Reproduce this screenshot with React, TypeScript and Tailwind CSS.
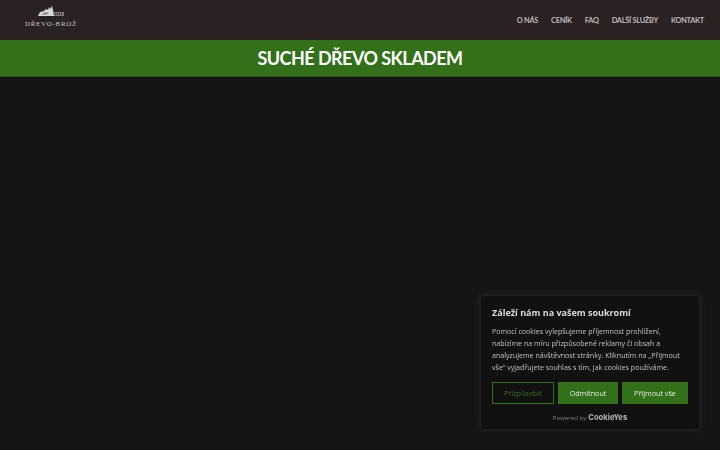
import React from "react";

const navItems = ["O NÁS", "CENÍK", "FAQ", "DALŠÍ SLUŽBY", "KONTAKT"];

function Logo() {
  return (
    <div className="flex w-[52px] flex-col items-center">
      <svg width="28" height="11" viewBox="0 0 28 11" className="mt-[6px]">
        <path d="M1 10 L3 6 L7 5 L9 3 L11 4 L12 1 L13 3 L15 0 L16 4 L17 10 Z" fill="#d8d8d8" />
        <path d="M4 8 L9 6 L12 7 L9 9 Z" fill="#8f8a8a" />
        <rect x="17" y="6" width="10" height="4" fill="#7d7878" />
        <path d="M18 7h1v2h-1zM20 7h1v2h-1zM22 7h1v2h-1zM24 7h1v2h-1z" fill="#3a3133" />
      </svg>
      <span className="mt-[2px] whitespace-nowrap font-['Liberation_Serif',serif] text-[7px] leading-[10px] tracking-[0.7px] text-[#c8c4c4]">
        DŘEVO-BROŽ
      </span>
    </div>
  );
}

function CookieBanner() {
  return (
    <div className="fixed right-[20px] bottom-[20px] w-[220px] rounded-[4px] border border-[#1f1f1f] bg-[#111111] px-[11px] pt-[9px] pb-[6px] font-['Open_Sans',sans-serif] shadow-[0_0_6px_rgba(60,60,60,0.5)]">
      <h2 className="text-[9px] leading-[16px] font-bold text-[#dadada]">Záleží nám na vašem soukromí</h2>
      <p className="mt-[4px] text-[7.1px] leading-[12px] text-[#c0c0c0]">
        Pomocí cookies vylepšujeme příjemnost prohlížení, nabízíme na míru přizpůsobené reklamy či obsah a analyzujeme návštěvnost stránky. Kliknutím na „Přijmout vše“ vyjadřujete souhlas s tím, jak cookies používáme.
      </p>
      <div className="mt-[9px] flex gap-[4px]">
        <button type="button" className="h-[22px] w-[62px] border border-[#33701a] text-[7.2px] text-[#33701a]">
          Přizpůsobit
        </button>
        <button type="button" className="h-[22px] w-[60px] bg-[#33701a] text-[7.2px] text-[#e8e8e8]">
          Odmítnout
        </button>
        <button type="button" className="h-[22px] w-[66px] bg-[#33701a] text-[7.2px] text-[#e8e8e8]">
          Přijmout vše
        </button>
      </div>
      <div className="mt-[9px] flex items-center justify-center gap-[2px]">
        <span className="text-[6.1px] leading-[10px] text-[#7f7f7f]">Powered by</span>
        <span className="font-['Inter',sans-serif] text-[7.6px] leading-[10px] font-extrabold text-[#a8a8a8]">CookieYes</span>
      </div>
    </div>
  );
}

export default function App() {
  return (
    <div className="flex h-[450px] w-[720px] flex-col overflow-hidden bg-[#151515]">
      <header className="flex h-[40px] items-start justify-between bg-[#2a2123] pr-[16px] pl-[25px]">
        <Logo />
        <nav className="mt-[15px] flex gap-[13px] font-['Lato',sans-serif] text-[7.4px] leading-[12px] font-bold tracking-[-0.28px] text-[#bdb8b8]">
          {navItems.map((item) => (
            <a key={item} href="#" className="whitespace-nowrap">
              {item}
            </a>
          ))}
        </nav>
      </header>
      <div className="flex h-[37px] items-center justify-center border-b border-[#2a5516] bg-[#33701a]">
        <h1 className="font-['Lato',sans-serif] text-[18px] font-bold tracking-[-0.55px] text-white">SUCHÉ DŘEVO SKLADEM</h1>
      </div>
      <CookieBanner />
    </div>
  );
}
